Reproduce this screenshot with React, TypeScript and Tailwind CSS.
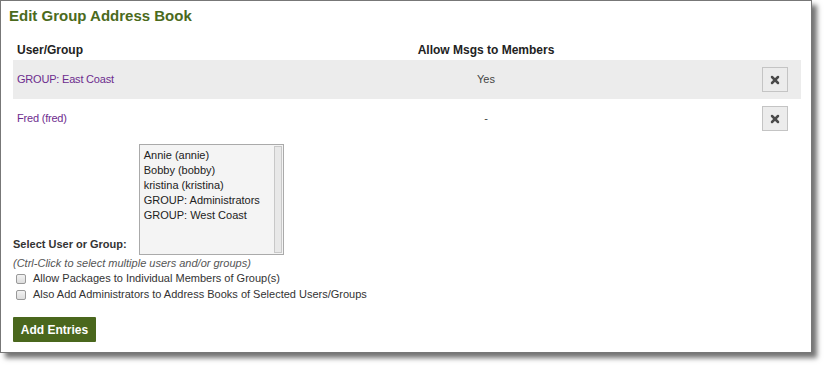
import { X } from "lucide-react";

const rows = [
  { name: "GROUP: East Coast", allow: "Yes", shaded: true },
  { name: "Fred (fred)", allow: "-", shaded: false },
];

const options = [
  "Annie (annie)",
  "Bobby (bobby)",
  "kristina (kristina)",
  "GROUP: Administrators",
  "GROUP: West Coast",
];

function RemoveButton() {
  return (
    <button className="flex h-[25px] w-[26px] items-center justify-center border border-[#c4c4c4] bg-[#ececec]">
      <X className="h-[12px] w-[12px] text-[#4a4a4a]" strokeWidth={5} />
    </button>
  );
}

export default function App() {
  return (
    <div className="h-[368px] w-[827px] bg-white font-['Liberation_Sans',Arial,sans-serif] text-[11px] text-[#222]">
      <div className="h-[353px] w-[812px] border border-[#777] bg-white pl-[12px] pr-[10px] shadow-[5px_5px_5px_rgba(0,0,0,0.55)]">
        <h1 className="-ml-[4px] pt-[5px] text-[15px] font-bold leading-[20px] text-[#4b6a1c]">
          Edit Group Address Book
        </h1>

        <div className="mt-[14px] grid grid-cols-[209px_528px_51px] items-center">
          <div className="pl-[4px] text-[12px] font-bold leading-[20px]">User/Group</div>
          <div className="text-center text-[12px] font-bold leading-[20px]">Allow Msgs to Members</div>
          <div />
          {rows.map((r) => (
            <div key={r.name} className={`col-span-3 grid h-[39px] grid-cols-[209px_528px_51px] items-center ${r.shaded ? "bg-[#ececec]" : ""}`}>
              <div className="pl-[4px] tracking-[-0.2px] text-[#6d2c8e]">{r.name}</div>
              <div className="text-center text-[#444]">{r.allow}</div>
              <div className="flex justify-end pr-[13px]">
                <RemoveButton />
              </div>
            </div>
          ))}
        </div>

        <div className="mt-[6px] flex items-end gap-[12px]">
          <label className="pb-[3px] font-bold text-[#333]">Select User or Group:</label>
          <div className="flex h-[111px] w-[145px] border border-[#aaa] bg-[#f4f4f4]">
            <ul className="flex-1 pl-[4px] pt-[3px] leading-[15px] text-[#222]">
              {options.map((o) => (
                <li key={o}>{o}</li>
              ))}
            </ul>
            <div className="m-[1px] w-[8px] border border-[#c8c8c8] bg-[#e8e8e8]" />
          </div>
        </div>
        <p className="mt-[1px] italic leading-[14px] text-[#555]">
          (Ctrl-Click to select multiple users and/or groups)
        </p>

        <div className="mt-[2px] flex flex-col gap-[3px] pl-[3px]">
          <label className="flex items-center gap-[7px] leading-[13px] text-[#333]">
            <span className="h-[10px] w-[10px] rounded-[2px] border border-[#999] bg-gradient-to-b from-[#f2f2f2] to-[#ddd]" />
            Allow Packages to Individual Members of Group(s)
          </label>
          <label className="flex items-center gap-[7px] leading-[13px] text-[#333]">
            <span className="h-[10px] w-[10px] rounded-[2px] border border-[#999] bg-gradient-to-b from-[#f2f2f2] to-[#ddd]" />
            Also Add Administrators to Address Books of Selected Users/Groups
          </label>
        </div>

        <button className="mt-[16px] h-[25px] w-[83px] rounded-[1px] bg-[#4a671d] text-[12px] font-bold text-white">
          Add Entries
        </button>
      </div>
    </div>
  );
}
